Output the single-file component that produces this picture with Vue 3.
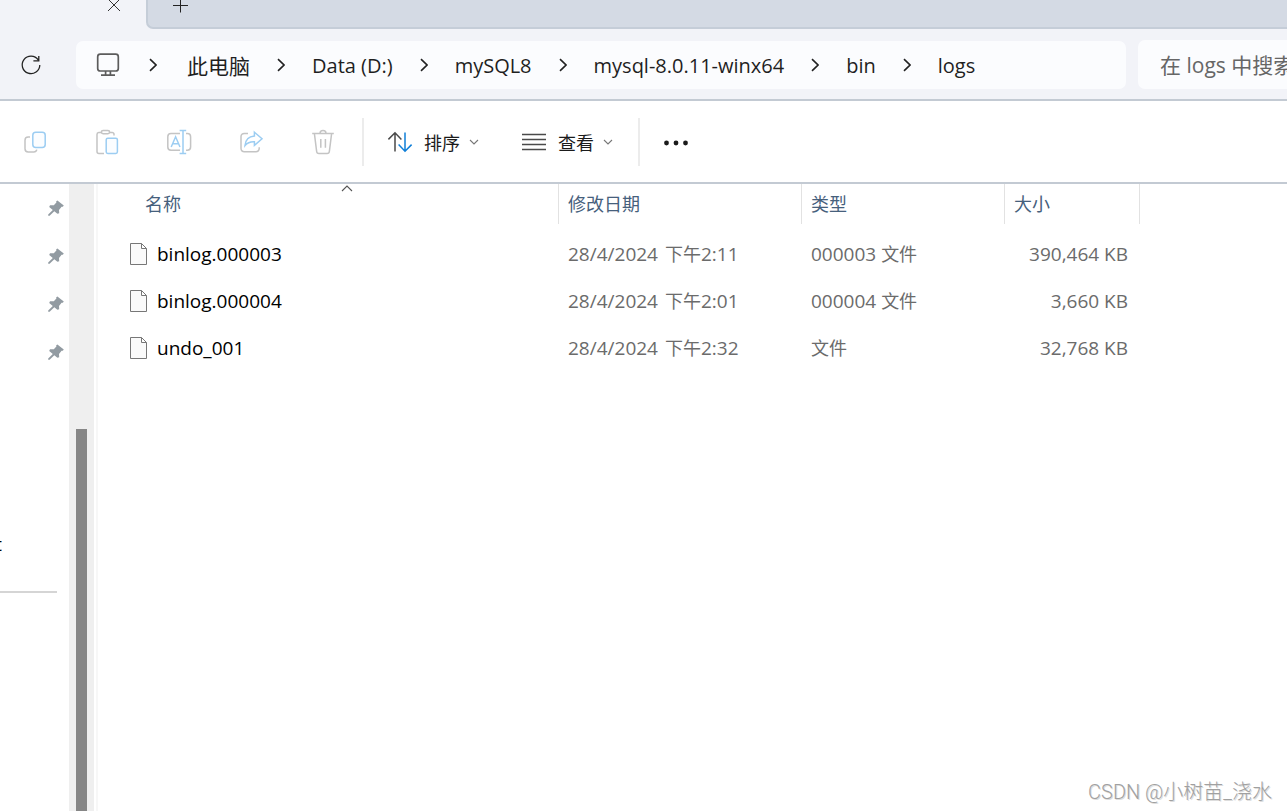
<script setup>
const crumbs = [
  { text: '此电脑', cjk: true },
  { text: 'Data (D:)' },
  { text: 'mySQL8' },
  { text: 'mysql-8.0.11-winx64' },
  { text: 'bin' },
  { text: 'logs' },
]
const files = [
  { name: 'binlog.000003', date: '28/4/2024', period: '下午', time: '2:11', ext: '000003', size: '390,464 KB' },
  { name: 'binlog.000004', date: '28/4/2024', period: '下午', time: '2:01', ext: '000004', size: '3,660 KB' },
  { name: 'undo_001', date: '28/4/2024', period: '下午', time: '2:32', ext: '', size: '32,768 KB' },
]
</script>

<template>
  <div class="window">
    <header class="tabs">
      <div class="tab">
        <button class="plain close" aria-label="关闭标签页">
          <svg width="14" height="14" viewBox="0 0 14 14"><path d="M1 1L13 13M13 1L1 13" /></svg>
        </button>
      </div>
      <div class="strip">
        <button class="plain" aria-label="新建标签页">
          <svg width="16" height="16" viewBox="0 0 16 16"><path d="M8.5 0.5V15.5M1 8.5H16" /></svg>
        </button>
      </div>
    </header>

    <div class="navbar">
      <button class="plain refresh" aria-label="刷新">
        <svg width="22" height="22" viewBox="0 0 22 22"><path d="M18.2 5.8A8.8 8.8 0 1 0 19.8 11M18.8 2V6.8H13.4" /></svg>
      </button>
      <nav class="address" aria-label="地址">
        <svg class="pc" width="24" height="24" viewBox="0 0 24 24">
          <rect x="1.7" y="1.2" width="20.6" height="16.8" rx="2.6" />
          <path d="M9.6 18V22M14.4 18V22M5 22.2H19" />
        </svg>
        <template v-for="c in crumbs" :key="c.text">
          <svg class="chev" width="8" height="14" viewBox="0 0 8 14"><path d="M1 1.2L7 7L1 12.8" /></svg>
          <a href="#" :class="{ cjk: c.cjk }">{{ c.text }}</a>
        </template>
      </nav>
      <input class="search" type="text" aria-label="搜索" placeholder="在 logs 中搜索" />
    </div>

    <div class="toolbar">
      <div class="actions">
        <button class="plain" aria-label="复制" disabled>
          <svg width="26" height="26" viewBox="0 0 26 26">
            <path class="g" d="M8 8H6.2A3.2 3.2 0 0 0 3 11.2V19.8A3.2 3.2 0 0 0 6.2 23H11.8A3.2 3.2 0 0 0 14.8 20.6" />
            <rect class="b" x="10.8" y="3.2" width="12.4" height="15.4" rx="3" />
          </svg>
        </button>
        <button class="plain" aria-label="粘贴" disabled>
          <svg width="26" height="26" viewBox="0 0 26 26">
            <path class="g" d="M7 3.4H4.8A2 2 0 0 0 3 5.4V22.4A2 2 0 0 0 5 24.4H10M16 3.4H18.2A1.8 1.8 0 0 1 20 5.2V6.6" />
            <rect class="g" x="7.4" y="1.4" width="8.2" height="3.4" rx="1.7" />
            <rect class="b" x="12.2" y="9.2" width="11.2" height="15.2" rx="1.6" />
          </svg>
        </button>
        <button class="plain" aria-label="重命名" disabled>
          <svg width="26" height="26" viewBox="0 0 26 26">
            <path class="g" d="M14 4.6H5A3.2 3.2 0 0 0 1.8 7.8V18A3.2 3.2 0 0 0 5 21.2H14M20 4.6H21.4A3.2 3.2 0 0 1 24.6 7.8V18A3.2 3.2 0 0 1 21.4 21.2H20" />
            <path class="b" d="M5.2 18L9.6 7.8L14 18M6.6 14.8H12.6M13.6 1.6H20.2M13.6 24.4H20.2M17 1.6V24.4" />
          </svg>
        </button>
        <button class="plain" aria-label="共享" disabled>
          <svg width="26" height="26" viewBox="0 0 26 26">
            <path class="g" d="M10 4.4H6.2A3.2 3.2 0 0 0 3 7.6V19.6A3.2 3.2 0 0 0 6.2 22.8H18A3.2 3.2 0 0 0 21.2 19.6V18.2" />
            <path class="b" d="M16.4 3.2L24 9.8L16.4 16.4V12.8C12 12.6 9.4 13.6 7 16.6C7.4 11.2 10.8 7.4 16.4 7Z" />
          </svg>
        </button>
        <button class="plain" aria-label="删除" disabled>
          <svg width="26" height="26" viewBox="0 0 26 26">
            <path class="g" d="M2.2 4.6H23.8M4.4 4.6L6.6 22.2A2.4 2.4 0 0 0 9 24.4H17A2.4 2.4 0 0 0 19.4 22.2L21.6 4.6M10 4.4A3 2.8 0 0 1 16 4.4M10.8 10V18.8M15.4 10V18.8" />
          </svg>
        </button>
      </div>
      <div class="menus">
        <button class="plain menu" type="button">
          <svg class="lead" width="26" height="22" viewBox="0 0 26 22">
            <path class="dark" d="M8 20.4V2M1.4 8.4L8 1.8L14.4 8.4" />
            <path class="blue" d="M18 1.6V20M11.6 13.6L18 20.2L24.6 13.6" />
          </svg>
          <span>排序</span>
          <svg class="down" width="10" height="6" viewBox="0 0 10 6"><path d="M1 1L5 5L9 1" /></svg>
        </button>
        <button class="plain menu" type="button">
          <svg class="lead" width="26" height="22" viewBox="0 0 26 22">
            <path class="dark" d="M1 3.5H25M1 8.5H25M1 13.5H25M1 18.5H25" />
          </svg>
          <span>查看</span>
          <svg class="down" width="10" height="6" viewBox="0 0 10 6"><path d="M1 1L5 5L9 1" /></svg>
        </button>
      </div>
      <button class="plain more" aria-label="查看更多">
        <svg width="26" height="6" viewBox="0 0 26 6"><circle cx="3.5" cy="3" r="2.4" /><circle cx="13" cy="3" r="2.4" /><circle cx="22.5" cy="3" r="2.4" /></svg>
      </button>
    </div>

    <div class="body">
      <aside class="sidebar">
        <div class="pins">
          <svg v-for="n in 4" :key="n" width="16" height="16" viewBox="0 0 16 16">
            <path d="M9.4 0.4L15.8 5.6L14.8 6.8L13.6 6.8L11 10L11.2 13.2L9.4 13.8L6.3 11.2L1.6 15.8H0.2V14.4L4.8 9.9L1.2 7L2 5.2L5.8 5.2L8.4 2.6L8.2 1.2Z" />
          </svg>
        </div>
        <div class="cut"><span>t</span></div>
        <hr />
      </aside>
      <div class="scroll"><div class="thumb"></div></div>
      <main class="list">
        <table>
          <colgroup><col class="c1" /><col class="c2" /><col class="c3" /><col class="c4" /><col /></colgroup>
          <thead>
            <tr>
              <th class="first">
                名称
                <svg class="sort" width="12" height="7" viewBox="0 0 12 7"><path d="M1 6L6 1L11 6" /></svg>
              </th>
              <th>修改日期</th>
              <th>类型</th>
              <th>大小</th>
              <td></td>
            </tr>
          </thead>
          <tbody>
            <tr v-for="f in files" :key="f.name">
              <td>
                <div class="name">
                  <svg width="18" height="23" viewBox="0 0 18 23"><path d="M0.5 0.5H11.5L16.5 5.5V21.5H0.5ZM11.5 0.5V5.5H16.5" /></svg>
                  <span>{{ f.name }}</span>
                </div>
              </td>
              <td>{{ f.date }} <span class="period">{{ f.period }}</span>{{ f.time }}</td>
              <td>{{ f.ext }} <span class="han">文件</span></td>
              <td class="size">{{ f.size }}</td>
              <td></td>
            </tr>
          </tbody>
        </table>
      </main>
    </div>
    <div class="mark">CSDN @小树苗_浇水</div>
  </div>
</template>

<style>
body { margin: 0; background: #fff; }
</style>

<style scoped>
.window {
  position: relative;
  display: flex;
  flex-direction: column;
  height: 100vh;
  overflow: hidden;
  background: #fff;
  color: #1b1b1b;
  font-family: "Open Sans", "Noto Sans CJK SC", sans-serif;
  font-size: 20px;
}
* { box-sizing: border-box; }
svg { display: block; flex: none; fill: none; stroke: #333; }
.plain { display: flex; align-items: center; padding: 0; border: 0; background: none; font: inherit; color: inherit; }

.tabs { display: flex; height: 29px; background: #f2f3f8; }
.tab { width: 146px; flex: none; display: flex; justify-content: flex-end; align-items: flex-start; padding-right: 25px; }
.tab svg { margin-top: -2px; }
.strip { flex: 1; display: flex; align-items: flex-start; padding-left: 24px; background: #d4dae4; border: 2px solid #c5cdd8; border-width: 0 0 2px 2px; border-bottom-left-radius: 7px; }
.strip svg { margin-top: -3px; stroke: #222; }

.navbar { display: flex; align-items: flex-end; height: 72px; padding-bottom: 10px; background: #f2f3f8; border-bottom: 2px solid #c3cad3; }
.refresh { flex: none; width: 76px; height: 48px; padding-left: 20px; }
.refresh svg { stroke: #222; stroke-width: 1.3; }
.address { flex: 1; display: flex; align-items: center; height: 48px; margin-right: 12px; padding-left: 20px; border-radius: 7px; background: #fbfcfe; }
.address .pc { stroke: #5c5c5c; stroke-width: 1.7; }
.address .chev { stroke: #222; stroke-width: 1.6; margin: 0 27px; }
.address .pc + .chev { margin-left: 29px; margin-right: 30px; }
.address a { color: #1f1f1f; text-decoration: none; white-space: nowrap; }
.address a.cjk { font-size: 21px; }
.search { flex: none; width: 149px; height: 49px; padding: 0 0 0 22px; border: 0; border-radius: 7px 0 0 7px; background: #fbfcfe; font: inherit; font-size: 21px; }
.search::placeholder { color: #666; opacity: 1; }

.toolbar { display: flex; align-items: center; height: 83px; flex: none; border-bottom: 2px solid #c3cad3; }
.actions { display: flex; gap: 46px; height: 48px; width: 364px; padding-left: 22px; border-right: 2px solid #ececec; }
.actions svg { stroke-width: 1.5; }
.g { stroke: #c4c4c4; fill: none; }
.b { stroke: #9ccdf2; fill: #fbfdff; }
.actions path.b { fill: none; }
.menus { display: flex; gap: 42px; height: 48px; padding: 0 25px 0 23px; border-right: 2px solid #ececec; }
.menu { font-size: 18px; color: #1b1b1b; }
.menu span { margin: 0 9px 0 11px; }
.menu svg { stroke-width: 1.5; }
.dark { stroke: #4a4a4a; }
.blue { stroke: #0f7fd8; }
.menu .down { stroke: #777; stroke-width: 1.1; }
.more { padding: 22px 23px 20px; }
.more svg { fill: #1b1b1b; stroke: none; }

.body { flex: 1; display: flex; min-height: 0; }
.sidebar { width: 69px; flex: none; }
.pins { display: flex; flex-direction: column; align-items: flex-end; gap: 32px; padding: 16px 5px 0 0; }
.pins svg { fill: #929ba2; stroke: none; }
.cut { display: flex; justify-content: flex-end; width: 2px; margin-top: 168px; overflow: hidden; color: #000; font-size: 18px; line-height: 32px; }
hr { width: 57px; height: 2px; margin: 31px 0 0; border: 0; background: #d5d5d5; }
.scroll { width: 25px; flex: none; padding: 245px 7px 0; background: #efefef; }
.thumb { height: 100%; background: #868686; }
.list { flex: 1; min-width: 0; margin-left: 2px; border-left: 2px solid #f7f7f7; }

table { width: 100%; table-layout: fixed; border-collapse: separate; border-spacing: 0; }
.c1 { width: 461px; }
.c2 { width: 243px; }
.c3 { width: 203px; }
.c4 { width: 135px; }
th { position: relative; height: 40px; padding: 0 0 0 9px; border-right: 1px solid #e2e2e2; color: #46607c; font-size: 18px; font-weight: 400; line-height: 40px; text-align: left; }
th.first { padding-left: 47px; }
.sort { position: absolute; top: 1px; left: 243px; stroke: #555; stroke-width: 1.1; }
tbody::before { content: ""; display: block; height: 7px; }
tbody td { height: 47px; padding: 0 0 0 9px; color: #6b6b6b; font-size: 19px; line-height: 47px; white-space: nowrap; }
.han, .period { font-size: 18px; }
.period { margin-left: 2px; }
tbody td:first-child { padding-left: 32px; }
.name { display: flex; align-items: center; gap: 9px; color: #000; }
.name svg { fill: #fafafa; stroke: #777; }
tbody .size { padding: 0 12px 0 0; text-align: right; }
.mark { position: absolute; right: 15px; bottom: 5px; color: #a0a0a0; font-size: 20px; line-height: 28px; font-family: Roboto, "Noto Sans CJK SC", sans-serif; font-weight: 300; text-shadow: 1px 1px 0 #ddd; }
</style>
